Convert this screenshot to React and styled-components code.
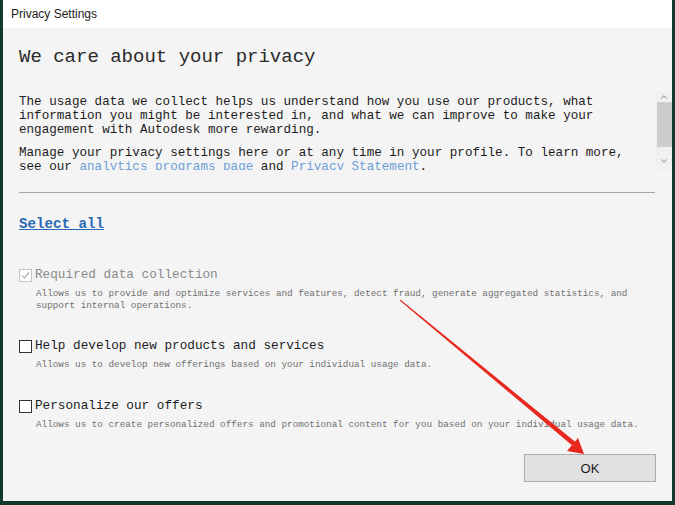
import React from 'react'
import styled, { createGlobalStyle } from 'styled-components'
import { ChevronUp, ChevronDown } from 'lucide-react'

const GlobalStyle = createGlobalStyle`
  html, body {
    margin: 0;
    padding: 0;
    background: #0f3a2f;
  }
`

const Desktop = styled.div`
  position: relative;
  width: 675px;
  height: 505px;
  overflow: hidden;
  background: #0f3a2f;
`

const Window = styled.div`
  margin-left: 3px;
  width: 669px;
  height: 501px;
  display: flex;
  flex-direction: column;
  background: #f4f4f4;
`

const TitleBar = styled.div`
  height: 28px;
  flex-shrink: 0;
  display: flex;
  align-items: center;
  padding-left: 8px;
  background: #ffffff;
  font-family: "Liberation Sans", Arial, sans-serif;
  font-size: 12px;
  color: #1b1b1b;
`

const Body = styled.div`
  flex: 1;
  display: flex;
  flex-direction: column;
  padding: 16px 0 0 16px;
  font-family: "Liberation Mono", "Courier New", monospace;
  color: #1c1c1c;
`

const Heading = styled.h1`
  margin: 0;
  font-size: 19px;
  font-weight: normal;
  line-height: 26px;
  color: #2a2a2a;
`

const ScrollArea = styled.div`
  margin-top: 22px;
  height: 78px;
  display: flex;
`

const ScrollText = styled.div`
  flex: 1;
  overflow: hidden;
  padding: 3px 14px 0 0;
`

const Para = styled.p`
  margin: 0 0 9px;
  font-size: 12.6px;
  line-height: 14px;
`

const TextLink = styled.a`
  color: #6d9ed6;
  text-decoration: none;
`

const ScrollBar = styled.div`
  width: 16px;
  display: flex;
  flex-direction: column;
  align-items: center;
  background: #f0f0f0;
  color: #666;
`

const ScrollButton = styled.div`
  height: ${p => p.h}px;
  display: flex;
  align-items: center;
  justify-content: center;
`

const Thumb = styled.div`
  width: 15px;
  height: 45px;
  background: #cdcdcd;
`

const Spacer = styled.div`
  flex: 1;
`

const Divider = styled.hr`
  margin: 22px 17px 0 0;
  border: none;
  border-top: 1px solid #a6a6a6;
  height: 0;
`

const SelectAll = styled.a`
  margin-top: 22px;
  align-self: flex-start;
  font-size: 14.2px;
  line-height: 18px;
  font-weight: bold;
  color: #2a6bb5;
  text-decoration: underline;
`

const Option = styled.div`
  margin-top: ${p => p.gap}px;
  display: flex;
  flex-direction: column;
`

const OptionRow = styled.label`
  display: flex;
  align-items: center;
  gap: 3px;
  font-size: 12.7px;
  line-height: 16px;
  color: ${p => (p.disabled ? '#8a8a8a' : '#1c1c1c')};
`

const Box = styled.span`
  width: 11px;
  height: 11px;
  border: 1px solid ${p => (p.disabled ? '#c4c4c4' : '#333333')};
  background: #ffffff;
  display: flex;
  align-items: center;
  justify-content: center;
  flex-shrink: 0;
`

const Desc = styled.div`
  margin: 5px 0 0 17px;
  width: 620px;
  font-size: 9.3px;
  line-height: 12px;
  color: #707070;
`

const Footer = styled.div`
  margin-top: auto;
  padding: 0 16px 19px 0;
  display: flex;
  justify-content: flex-end;
`

const OkButton = styled.button`
  width: 132px;
  height: 28px;
  background: #e1e1e1;
  border: 1px solid #adadad;
  font-family: "Liberation Sans", Arial, sans-serif;
  font-size: 13px;
  color: #1b1b1b;
`

const Annotation = styled.svg`
  position: absolute;
  left: 0;
  top: 0;
  pointer-events: none;
`

const CheckBox = ({ checked, disabled }) => (
  <Box disabled={disabled}>
    {checked && (
      <svg width="9" height="9" viewBox="0 0 9 9">
        <path d="M1 4.6 L3.5 7 L8 1.5" fill="none" stroke="#b0b0b0" strokeWidth="1.2" />
      </svg>
    )}
  </Box>
)

const options = [
  {
    label: 'Required data collection',
    desc: 'Allows us to provide and optimize services and features, detect fraud, generate aggregated statistics, and support internal operations.',
    checked: true,
    disabled: true,
    gap: 34,
  },
  {
    label: 'Help develop new products and services',
    desc: 'Allows us to develop new offerings based on your individual usage data.',
    gap: 26,
  },
  {
    label: 'Personalize our offers',
    desc: 'Allows us to create personalized offers and promotional content for you based on your individual usage data.',
    gap: 27,
  },
]

export default function App() {
  return (
    <Desktop>
      <GlobalStyle />
      <Window>
        <TitleBar>Privacy Settings</TitleBar>
        <Body>
          <Heading>We care about your privacy</Heading>
          <ScrollArea>
            <ScrollText>
              <Para>
                The usage data we collect helps us understand how you use our products, what
                information you might be interested in, and what we can improve to make your
                engagement with Autodesk more rewarding.
              </Para>
              <Para>
                Manage your privacy settings here or at any time in your profile. To learn more,
                see our <TextLink>analytics programs page</TextLink> and{' '}
                <TextLink>Privacy Statement</TextLink>.
              </Para>
            </ScrollText>
            <ScrollBar>
              <ScrollButton h={10}><ChevronUp size={10} strokeWidth={2} /></ScrollButton>
              <Thumb />
              <Spacer />
              <ScrollButton h={18}><ChevronDown size={10} strokeWidth={2} /></ScrollButton>
            </ScrollBar>
          </ScrollArea>
          <Divider />
          <SelectAll>Select all</SelectAll>
          {options.map(o => (
            <Option key={o.label} gap={o.gap}>
              <OptionRow disabled={o.disabled}>
                <CheckBox checked={o.checked} disabled={o.disabled} />
                {o.label}
              </OptionRow>
              <Desc>{o.desc}</Desc>
            </Option>
          ))}
          <Footer>
            <OkButton>OK</OkButton>
          </Footer>
        </Body>
      </Window>
      <Annotation width="675" height="505">
        <polygon points="399.7,300.4 400.3,299.6 577,443.3 574,447" fill="#e8281e" />
        <polygon points="584,454 567,451 578,438" fill="#e8281e" />
      </Annotation>
    </Desktop>
  )
}
